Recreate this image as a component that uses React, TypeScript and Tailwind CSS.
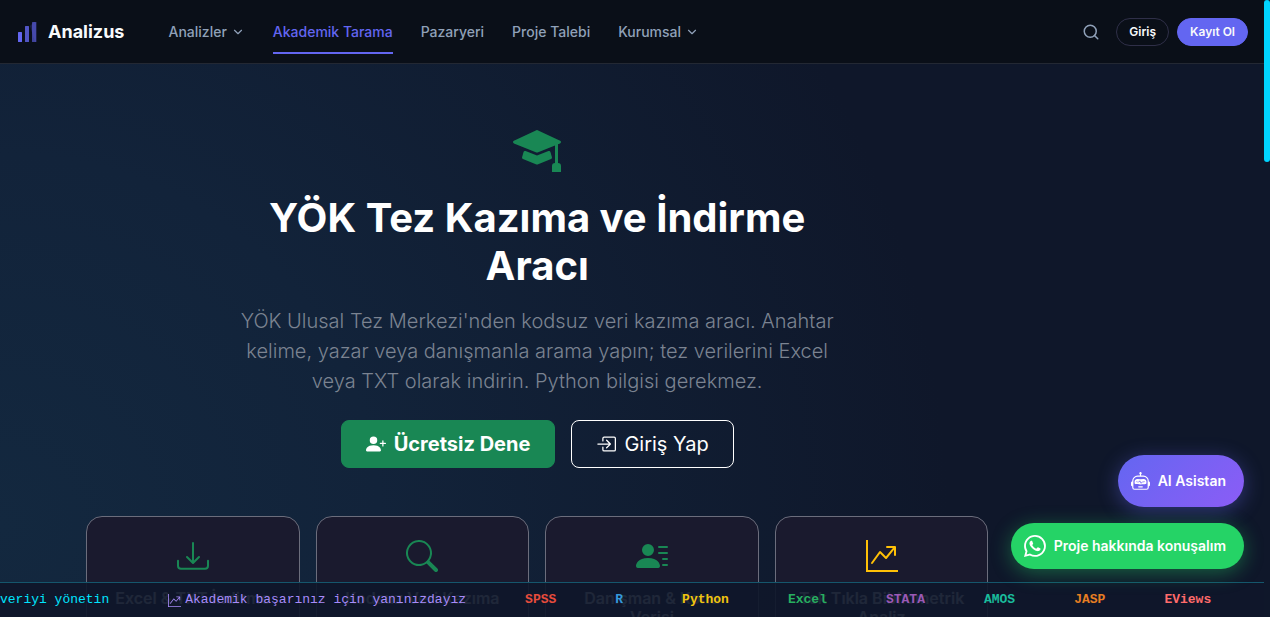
import React from 'react';
import {
  BsBoxArrowInRight,
  BsDownload,
  BsGraphUpArrow,
  BsMortarboardFill,
  BsPersonLinesFill,
  BsPersonPlusFill,
  BsRobot,
  BsSearch,
  BsWhatsapp,
} from 'react-icons/bs';
import { ChevronDown, Search } from 'lucide-react';

const navItems = [
  { label: 'Analizler', menu: true },
  { label: 'Akademik Tarama', active: true },
  { label: 'Pazaryeri' },
  { label: 'Proje Talebi' },
  { label: 'Kurumsal', menu: true },
];

const features = [
  { title: 'Excel & TXT İndirme', icon: BsDownload, color: 'text-[#198754]' },
  { title: 'Kodsuz Veri Kazıma', icon: BsSearch, color: 'text-[#198754]' },
  { title: 'Danışman & Konu Verisi', icon: BsPersonLinesFill, color: 'text-[#198754]' },
  { title: 'Tek Tıkla Bibliometrik Analiz', icon: BsGraphUpArrow, color: 'text-[#ffc107]' },
];

const tools = [
  { name: 'SPSS', color: 'text-[#e74c3c]' },
  { name: 'R', color: 'text-[#3498db]' },
  { name: 'Python', color: 'text-[#f1c40f]' },
  { name: 'Excel', color: 'text-[#27ae60]' },
  { name: 'STATA', color: 'text-[#9b59b6]' },
  { name: 'AMOS', color: 'text-[#1abc9c]' },
  { name: 'JASP', color: 'text-[#e67e22]' },
  { name: 'EViews', color: 'text-[#ff6b6b]' },
];

function Logo() {
  return (
    <svg width="20" height="20" viewBox="0 0 20 20" fill="none" aria-hidden="true">
      <rect x="0" y="10" width="4" height="10" rx="0.5" fill="#6366f1" />
      <rect x="7" y="4" width="4" height="16" rx="0.5" fill="#6366f1" opacity="0.8" />
      <rect x="14" y="0" width="4" height="20" rx="0.5" fill="#6366f1" opacity="0.6" />
      <path d="M12 4L16 0H19V20H17" fill="#6366f1" opacity="0.2" />
    </svg>
  );
}

function Header() {
  return (
    <header className="flex h-16 shrink-0 items-center justify-between border-b border-[#232833] bg-[#0a0f18] px-4">
      <div className="flex h-full items-center gap-11">
        <a href="#" className="flex items-center gap-2.5 pl-0.5 text-lg font-bold text-slate-50">
          <Logo />
          Analizus
        </a>
        <nav className="flex items-center gap-7">
          {navItems.map((item) => (
            <a
              key={item.label}
              href="#"
              className={
                item.active
                  ? 'flex h-11 items-center border-y-2 border-t-transparent border-b-[#6366f1] text-sm font-medium text-[#6366f1]'
                  : 'flex h-11 items-center gap-1 text-sm font-medium text-slate-400'
              }
            >
              {item.label}
              {item.menu && <ChevronDown size={14} />}
            </a>
          ))}
        </nav>
      </div>
      <div className="flex items-center gap-2 text-xs font-semibold">
        <button type="button" aria-label="Ara" className="mr-2 text-slate-400">
          <Search size={18} />
        </button>
        <button type="button" className="h-7 rounded-full border border-[#2f2f48] px-3 text-slate-50">
          Giriş
        </button>
        <button type="button" className="h-7 rounded-full border border-[#6366f1] bg-[#6366f1] px-3 text-slate-50">
          Kayıt Ol
        </button>
      </div>
    </header>
  );
}

function Hero() {
  return (
    <section className="flex flex-col items-center text-center">
      <BsMortarboardFill size={48} className="text-[#198754]" />
      <h1 className="mt-[22px] max-w-[600px] text-[40px] leading-[48px] font-bold text-white">
        YÖK Tez Kazıma ve İndirme Aracı
      </h1>
      <p className="mt-4 max-w-[600px] text-xl leading-[30px] font-light text-[#7b8391]">
        YÖK Ulusal Tez Merkezi'nden kodsuz veri kazıma aracı. Anahtar kelime, yazar veya danışmanla arama
        yapın; tez verilerini Excel veya TXT olarak indirin. Python bilgisi gerekmez.
      </p>
      <div className="mt-6 flex gap-4 text-xl text-white">
        <a
          href="#"
          className="flex h-12 items-center gap-2 rounded-lg border border-[#198754] bg-[#198754] px-6 font-bold"
        >
          <BsPersonPlusFill size={20} />
          Ücretsiz Dene
        </a>
        <a href="#" className="flex h-12 items-center gap-2 rounded-lg border border-white px-6">
          <BsBoxArrowInRight size={20} />
          Giriş Yap
        </a>
      </div>
    </section>
  );
}

function Features() {
  return (
    <section className="mt-12 grid grid-cols-4 gap-4">
      {features.map(({ title, icon: Icon, color }) => (
        <article
          key={title}
          className="flex h-52 flex-col items-center rounded-2xl border border-[#6b6d7c] bg-[#1a1a2e] px-5 py-[23px] text-center"
        >
          <Icon size={32} className={color} />
          <h2 className="mt-[17px] text-base leading-[19px] font-semibold text-slate-100">{title}</h2>
        </article>
      ))}
    </section>
  );
}

function Ticker() {
  return (
    <div className="absolute inset-x-0 bottom-0 flex h-[35px] items-center gap-[59px] overflow-hidden border-t border-[#15566c] bg-[#0f172a]/93 font-['Liberation_Mono',monospace] text-[13px] whitespace-nowrap">
      <span className="text-[#00e5ff]">veriyi yönetin</span>
      <span className="flex items-center gap-1 text-[#a78bfa]">
        <BsGraphUpArrow size={13} />
        Akademik başarınız için yanınızdayız
      </span>
      {tools.map((tool) => (
        <span key={tool.name} className={`font-bold ${tool.color}`}>
          {tool.name}
        </span>
      ))}
    </div>
  );
}

function FloatingActions() {
  return (
    <div className="absolute right-5 bottom-12 flex flex-col items-end gap-4 text-sm font-semibold text-white">
      <button
        type="button"
        className="flex h-[52px] items-center gap-2 rounded-full bg-linear-135 from-[#6366f1] to-[#8b5cf6] pr-[18px] pl-[13px] shadow-[0_4px_20px_rgba(99,102,241,0.4)]"
      >
        <BsRobot size={19} />
        AI Asistan
      </button>
      <a
        href="#"
        className="flex h-[46px] items-center gap-2 rounded-full bg-[#25d366] pr-[18px] pl-[13px] shadow-[0_4px_20px_rgba(37,211,102,0.4)]"
      >
        <BsWhatsapp size={22} />
        Proje hakkında konuşalım
      </a>
    </div>
  );
}

export default function App() {
  return (
    <div className="flex h-screen bg-[#0f172a] font-['Inter',sans-serif]">
      <div className="relative flex min-w-0 flex-1 flex-col overflow-hidden bg-[radial-gradient(ellipse_75%_150%_at_0%_85%,#13283f,#12233a_40%,#0f172a)]">
        <Header />
        <main className="w-[85%] px-[86px] pt-15">
          <Hero />
          <Features />
        </main>
        <Ticker />
        <FloatingActions />
      </div>
      {/* scroll position */}
      <div className="w-1.5 shrink-0">
        <div className="h-[162px] rounded-full bg-[#00d4ff]" />
      </div>
    </div>
  );
}
